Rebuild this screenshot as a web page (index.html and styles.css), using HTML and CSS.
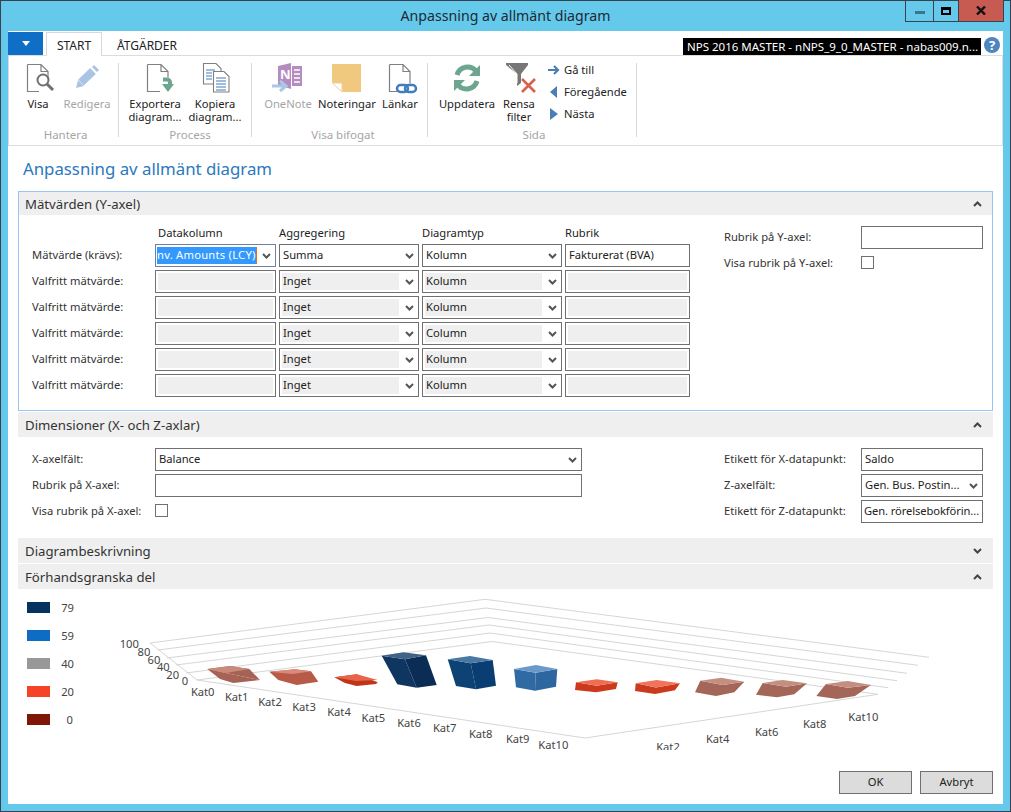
FILE: index.html
```html
<!DOCTYPE html>
<html lang="sv">
<head>
<meta charset="utf-8">
<title>Anpassning av allmänt diagram</title>
<link rel="stylesheet" href="styles.css">
</head>
<body>
<svg class="defs" aria-hidden="true">
  <symbol id="chev" viewBox="0 0 9 6"><path d="M1 1l3.500 3.500L8 1" fill="none" stroke="#555" stroke-width="2"/></symbol>
  <symbol id="chev-up" viewBox="0 0 9 6"><path d="M1 5l3.500-3.500L8 5" fill="none" stroke="#444" stroke-width="2"/></symbol>
  <symbol id="chev-down" viewBox="0 0 9 6"><path d="M1 1l3.500 3.500L8 1" fill="none" stroke="#444" stroke-width="2"/></symbol>
</svg>
<div class="window">
  <header class="titlebar">
    <span></span>
    <div class="titlebar-text">Anpassning av allmänt diagram</div>
    <div class="wincontrols">
      <div class="wc wc-min"><span class="wc-min-bar"></span></div>
      <div class="wc wc-max"><span class="wc-max-box"></span></div>
      <div class="wc wc-close"><svg width="10" height="9" viewBox="0 0 10 9"><path d="M1 .5l8 8M9 .5l-8 8" stroke="#111" stroke-width="2.400" fill="none"/></svg></div>
    </div>
  </header>
  <div class="client">
    <div class="tabrow">
      <div class="appmenu"><span class="appmenu-arrow"></span></div>
      <div class="tab tab-active">START</div>
      <div class="tab">ÅTGÄRDER</div>
      <div class="tabrow-right">
        <div class="company">NPS 2016 MASTER - nNPS_9_0_MASTER - nabas009.n...</div>
        <div class="help">?</div>
      </div>
    </div>
    <div class="ribbon">
      <div class="group group-a">
        <div class="group-btns">
          <div class="rbtn w50"><svg class="ico" width="32" height="30" viewBox="0 0 32 30"><path d="M5.500 1.500H19l7 7v8M5.500 1.500v27H17M19 1.500v7h7" fill="none" stroke="#808080" stroke-width="1.200"/><circle cx="21" cy="17" r="5.500" fill="#fff" stroke="#707070" stroke-width="2"/><path d="M25 21l6 6" stroke="#707070" stroke-width="3"/></svg><span class="rlabel">Visa</span></div>
          <div class="rbtn w48 off"><svg class="ico" width="32" height="30" viewBox="0 0 32 30"><path d="M5 25l2-8 6 6z" fill="#a9c4e4"/><path d="M10 19.500L22 8" stroke="#a9c4e4" stroke-width="8"/><path d="M23.500 6.500l2-2" stroke="#a9c4e4" stroke-width="7"/></svg><span class="rlabel">Redigera</span></div>
        </div>
        <div class="group-label">Hantera</div>
      </div>
      <div class="group group-b">
        <div class="group-btns">
          <div class="rbtn w60"><svg class="ico" width="32" height="30" viewBox="0 0 32 30"><path d="M8.500 1.500H22l7 7v6M8.500 1.500v27H21M22 1.500v7h7" fill="none" stroke="#808080" stroke-width="1.200"/><path d="M24 16.500h4a3 3 0 0 1 3 3v4" fill="none" stroke="#6ea58f" stroke-width="4"/><path d="M23 21h12l-6 8z" fill="#6ea58f"/></svg><span class="rlabel">Exportera<br>diagram...</span></div>
          <div class="rbtn w60"><svg class="ico" width="32" height="30" viewBox="0 0 32 30"><path d="M14 21H4.500V.5H17l5 5v3" fill="#fff" stroke="#808080" stroke-width="1.100"/><path d="M7 7h9M7 10h6M7 13h6M7 16h6" stroke="#3f7dbc"/><path d="M14.500 8.500H25l5 5v15.500H14.500z" fill="#fff" stroke="#808080" stroke-width="1.100"/><path d="M17 15h10M17 18h10M17 21h10M17 24h10M17 27h10" stroke="#3f7dbc"/></svg><span class="rlabel">Kopiera<br>diagram...</span></div>
        </div>
        <div class="group-label group-label-b">Process</div>
      </div>
      <div class="group group-c">
        <div class="group-btns">
          <div class="rbtn w58 off"><svg class="ico" width="36" height="30" viewBox="0 0 36 30"><path d="M8 3l13-3v26l-13-4z" fill="#b58cc0"/><path d="M22 3h10v20H22z" fill="#b58cc0"/><path d="M24 7h6M24 11h6M24 15h6M24 19h6" stroke="#fff" stroke-width="1.500"/><text class="onenote-n" x="10" y="16">N</text><path d="M2 23h13M10 18l6 5-6 5" fill="none" stroke="#a8c8e6" stroke-width="3"/></svg><span class="rlabel">OneNote</span></div>
          <div class="rbtn w60"><svg class="ico" width="32" height="30" viewBox="0 0 32 30"><path d="M1 1h29v28H12L1 19z" fill="#f0c97f"/><path d="M1.500 20h9.500v9z" fill="#fff" stroke="#e8d0a0"/></svg><span class="rlabel">Noteringar</span></div>
          <div class="rbtn w46"><svg class="ico" width="32" height="30" viewBox="0 0 32 30"><path d="M5.500 1.500H19l7 7v12M5.500 1.500v27H13M19 1.500v7h7" fill="none" stroke="#808080" stroke-width="1.200"/><rect x="13" y="22" width="11" height="7" rx="3.500" fill="none" stroke="#3f7dbc" stroke-width="2.500"/><rect x="21" y="22" width="11" height="7" rx="3.500" fill="none" stroke="#3f7dbc" stroke-width="2.500"/></svg><span class="rlabel">Länkar</span></div>
        </div>
        <div class="group-label">Visa bifogat</div>
      </div>
      <div class="group group-d">
        <div class="group-btns">
          <div class="rbtn w70"><svg class="ico" width="32" height="30" viewBox="0 0 32 30"><path d="M6 12a11 11 0 0 1 19-4" fill="none" stroke="#6ea58f" stroke-width="5"/><path d="M29 2v11H18z" fill="#6ea58f"/><path d="M26 18a11 11 0 0 1-19 4" fill="none" stroke="#6ea58f" stroke-width="5"/><path d="M3 28V17h11z" fill="#6ea58f"/></svg><span class="rlabel">Uppdatera</span></div>
          <div class="rbtn w34"><svg class="ico" width="32" height="30" viewBox="0 0 32 30"><path d="M3 0h22v2l-7 9v9l-4 3V11L3 2z" fill="#777"/><path d="M6 2l8 9v9" fill="none" stroke="#fff"/><path d="M19 16l13 13M32 16L19 29" stroke="#d9604a" stroke-width="2.600"/></svg><span class="rlabel">Rensa<br>filter</span></div>
          <div class="navlist">
            <div class="navitem"><svg class="navico" width="12" height="12" viewBox="0 0 12 12"><path d="M0 6h9M6 2l4 4-4 4" fill="none" stroke="#4a7fb5" stroke-width="2.200"/></svg>Gå till</div>
            <div class="navitem"><svg class="navico" width="12" height="12" viewBox="0 0 12 12"><path d="M9 0v12L2 6z" fill="#4a7fb5"/></svg>Föregående</div>
            <div class="navitem"><svg class="navico" width="12" height="12" viewBox="0 0 12 12"><path d="M2 0v12l8-6z" fill="#4a7fb5"/></svg>Nästa</div>
          </div>
        </div>
        <div class="group-label">Sida</div>
      </div>
    </div>
    <main class="page">
      <h1 class="page-title">Anpassning av allmänt diagram</h1>

      <section class="sec sec-focus">
        <div class="sec-head sec-head-focus">Mätvärden (Y-axel)<svg class="sec-chev"><use href="#chev-up"/></svg></div>
        <div class="sec-body sec-body-y">
          <div class="grid-y">
            <span></span><div class="colhead colhead-first">Datakolumn</div><div class="colhead">Aggregering</div><div class="colhead">Diagramtyp</div><div class="colhead">Rubrik</div>

            <div class="lbl">Mätvärde (krävs):</div>
            <div class="fld fld-sel fld-active"><span class="sel-text"><span class="selection">nv. Amounts (LCY)</span><span class="caret"></span></span><svg class="chev"><use href="#chev"/></svg></div>
            <div class="fld fld-sel"><span class="val">Summa</span><svg class="chev"><use href="#chev"/></svg></div>
            <div class="fld fld-sel"><span class="val">Kolumn</span><svg class="chev"><use href="#chev"/></svg></div>
            <div class="fld"><span class="val">Fakturerat (BVA)</span></div>

            <div class="lbl">Valfritt mätvärde:</div>
            <div class="fld"><span class="dis"></span></div>
            <div class="fld fld-sel"><span class="dis">Inget</span><svg class="chev"><use href="#chev"/></svg></div>
            <div class="fld fld-sel"><span class="dis">Kolumn</span><svg class="chev"><use href="#chev"/></svg></div>
            <div class="fld"><span class="dis"></span></div>

            <div class="lbl">Valfritt mätvärde:</div>
            <div class="fld"><span class="dis"></span></div>
            <div class="fld fld-sel"><span class="dis">Inget</span><svg class="chev"><use href="#chev"/></svg></div>
            <div class="fld fld-sel"><span class="dis">Kolumn</span><svg class="chev"><use href="#chev"/></svg></div>
            <div class="fld"><span class="dis"></span></div>

            <div class="lbl">Valfritt mätvärde:</div>
            <div class="fld"><span class="dis"></span></div>
            <div class="fld fld-sel"><span class="dis">Inget</span><svg class="chev"><use href="#chev"/></svg></div>
            <div class="fld fld-sel"><span class="dis">Column</span><svg class="chev"><use href="#chev"/></svg></div>
            <div class="fld"><span class="dis"></span></div>

            <div class="lbl">Valfritt mätvärde:</div>
            <div class="fld"><span class="dis"></span></div>
            <div class="fld fld-sel"><span class="dis">Inget</span><svg class="chev"><use href="#chev"/></svg></div>
            <div class="fld fld-sel"><span class="dis">Kolumn</span><svg class="chev"><use href="#chev"/></svg></div>
            <div class="fld"><span class="dis"></span></div>

            <div class="lbl">Valfritt mätvärde:</div>
            <div class="fld"><span class="dis"></span></div>
            <div class="fld fld-sel"><span class="dis">Inget</span><svg class="chev"><use href="#chev"/></svg></div>
            <div class="fld fld-sel"><span class="dis">Kolumn</span><svg class="chev"><use href="#chev"/></svg></div>
            <div class="fld"><span class="dis"></span></div>
          </div>
          <div class="grid-right">
            <div class="lbl">Rubrik på Y-axel:</div><div class="fld"></div>
            <div class="lbl">Visa rubrik på Y-axel:</div><div class="chk-cell"><span class="chk"></span></div>
          </div>
        </div>
      </section>

      <section class="sec sec-dim">
        <div class="sec-head">Dimensioner (X- och Z-axlar)<svg class="sec-chev"><use href="#chev-up"/></svg></div>
        <div class="sec-body sec-body-x">
          <div class="grid-x">
            <div class="lbl">X-axelfält:</div>
            <div class="fld fld-sel"><span class="val">Balance</span><svg class="chev"><use href="#chev"/></svg></div>
            <div class="lbl">Rubrik på X-axel:</div>
            <div class="fld"></div>
            <div class="lbl">Visa rubrik på X-axel:</div>
            <div class="chk-cell"><span class="chk"></span></div>
          </div>
          <div class="grid-right grid-right-x">
            <div class="lbl">Etikett för X-datapunkt:</div><div class="fld"><span class="val">Saldo</span></div>
            <div class="lbl">Z-axelfält:</div><div class="fld fld-sel"><span class="val">Gen. Bus. Postin...</span><svg class="chev"><use href="#chev"/></svg></div>
            <div class="lbl">Etikett för Z-datapunkt:</div><div class="fld"><span class="val val-tight">Gen. rörelsebokförin...</span></div>
          </div>
        </div>
      </section>

      <section class="sec">
        <div class="sec-head">Diagrambeskrivning<svg class="sec-chev"><use href="#chev-down"/></svg></div>
      </section>

      <section class="sec sec-preview">
        <div class="sec-head">Förhandsgranska del<svg class="sec-chev"><use href="#chev-up"/></svg></div>
        <svg class="chart" width="975" height="161" viewBox="18 589 975 161">
          <!-- legend -->
          <rect x="27" y="602" width="23" height="11" fill="#06325f"/><text class="ct end" x="74" y="612">79</text>
          <rect x="27" y="630" width="23" height="11" fill="#0f6cc4"/><text class="ct end" x="74" y="640">59</text>
          <rect x="27" y="658" width="23" height="11" fill="#989898"/><text class="ct end" x="74" y="668">40</text>
          <rect x="27" y="686" width="23" height="11" fill="#f44326"/><text class="ct end" x="74" y="696">20</text>
          <rect x="27" y="714" width="23" height="11" fill="#801605"/><text class="ct end" x="73" y="724">0</text>
          <!-- grid -->
          <g fill="none" stroke="#d6d6d6" stroke-width="1">
            <path d="M150 643L485 599.300 929 657.300"/>
            <path d="M158 650L486 608 918 665.300"/>
            <path d="M167 658L488 617.500 907 673.300"/>
            <path d="M176 665L489 625 897 680.700"/>
            <path d="M186 673L490 633 888 687.700"/>
            <path d="M197 680L492 641.500 878 694.300"/>
            <path d="M150 643L197 680L585 738L878 694.300"/>
          </g>
          <!-- bars -->
          <path d="M207.300 669L226 673 260 680 233.300 683 220 679z" fill="#a56255"/><path d="M207.300 669L230 666 249.300 669 260 680 226 673z" fill="#a56255"/><path d="M207.300 669L230 666 249.300 669 226 673z" fill="#c98a7a"/>
          <path d="M269.300 671.700L295 669.300 311 671.300 318.300 681.700 296.700 685 278.300 680z" fill="#b85a48"/><path d="M269.300 671.700L295 669.300 311 671.300 293 674z" fill="#d98a78"/>
          <path d="M334.300 677.300L356.700 674.300 377.700 682.300 376 684 356.700 686 345 683z" fill="#c0341a"/><path d="M334.300 677.300L356.700 674.300 377.700 680 356 681z" fill="#e8654a"/>
          <path d="M381.700 655.700L405 659.300 416.700 687.700 397.300 684.300z" fill="#0f3661"/><path d="M405 659.300L426 655.300 436.700 685 416.700 687.700z" fill="#0a2c55"/><path d="M381.700 655.700L403.300 652.300 426 655.300 405 659.300z" fill="#3f6285"/>
          <path d="M447.700 659.300L470.700 663.300 476 689.300 456 686z" fill="#0d4275"/><path d="M470.700 663.300L492.700 660 496 685.700 476 689.300z" fill="#0a3e72"/><path d="M447.700 659.300L470 656 492.700 660 470.700 663.300z" fill="#4a78a4"/>
          <path d="M514 669L535.700 672.700 535 690.700 516 687.300z" fill="#2f6aa5"/><path d="M535.700 672.700L557.300 669 556 686.700 535 690.700z" fill="#2e669f"/><path d="M514 669L536 665 557.300 669 535.700 672.700z" fill="#6b9aca"/>
          <path d="M576 682.300L596.700 685.700 617.700 682.300 616 689 596 692.300 575 690z" fill="#cc3a1e"/><path d="M576 682.300L596.700 679.300 617.700 682.300 596.700 685.700z" fill="#ef6d52"/>
          <path d="M635.700 683.300L656 687.500 680 683.300 675 690.300 655 694 635 691z" fill="#cc3a1e"/><path d="M635.700 683.300L656.700 680 680 683.300 656 687.500z" fill="#ef7459"/>
          <path d="M700.300 680.700L722.700 685 744.300 681.700 734.300 692.300 716 696 695 692.300z" fill="#a5665a"/><path d="M700.300 680.700L721 677.700 744.300 681.700 722.700 685z" fill="#c48e80"/>
          <path d="M762.700 683L786 686.700 807 683.300 794.300 694.300 777 697.300 756 694.700z" fill="#a5665a"/><path d="M762.700 683L782.700 680 807 683.300 786 686.700z" fill="#c48e80"/>
          <path d="M826 684L847.700 687.700 871 685 855 696 837 699 816.300 696z" fill="#a5665a"/><path d="M826 684L847.700 681 871 685 847.700 687.700z" fill="#c48e80"/>
          <!-- y axis labels -->
          <text class="ct mid" x="129.300" y="647.500">100</text>
          <text class="ct mid" x="144" y="656">80</text>
          <text class="ct mid" x="154" y="664">60</text>
          <text class="ct mid" x="163.300" y="671">40</text>
          <text class="ct mid" x="172.700" y="679">20</text>
          <text class="ct mid" x="185" y="685">0</text>
          <!-- left axis -->
          <text class="ct mid" x="202.700" y="696">Kat0</text>
          <text class="ct mid" x="236.700" y="701">Kat1</text>
          <text class="ct mid" x="270" y="706">Kat2</text>
          <text class="ct mid" x="304" y="711">Kat3</text>
          <text class="ct mid" x="339" y="716">Kat4</text>
          <text class="ct mid" x="373.300" y="722">Kat5</text>
          <text class="ct mid" x="409" y="727">Kat6</text>
          <text class="ct mid" x="444.700" y="732">Kat7</text>
          <text class="ct mid" x="480.700" y="738">Kat8</text>
          <text class="ct mid" x="517.700" y="743">Kat9</text>
          <text class="ct mid" x="553.300" y="749">Kat10</text>
          <!-- right axis -->
          <text class="ct mid" x="668" y="751">Kat2</text>
          <text class="ct mid" x="717.700" y="743">Kat4</text>
          <text class="ct mid" x="766.700" y="736">Kat6</text>
          <text class="ct mid" x="814.700" y="728">Kat8</text>
          <text class="ct mid" x="863.300" y="721">Kat10</text>
        </svg>
      </section>

      <footer class="footer">
        <div class="btn">OK</div>
        <div class="btn">Avbryt</div>
      </footer>
    </main>
  </div>
</div>
</body>
</html>
```

FILE: styles.css
```css
* { box-sizing: border-box; }
html, body { margin: 0; padding: 0; height: 100%; overflow: hidden; }
body {
  font-family: "Noto Sans", "Open Sans", "Liberation Sans", sans-serif;
  font-size: 11.200px;
  color: #222;
  background: #65c9ec;
}
.defs { width: 0; height: 0; display: block; position: absolute; }

.window {
  width: 1011px;
  height: 812px;
  border: 1px solid #37434e;
  background: #65c9ec;
  display: flex;
  flex-direction: column;
}
.titlebar {
  height: 30px;
  flex: none;
  display: grid;
  grid-template-columns: 1fr auto 1fr;
  padding: 0 6px;
}
.titlebar-text { font-size: 14.150px; line-height: 30px; color: #1c2a33; }
.wincontrols { justify-self: end; display: flex; height: 21px; margin-top: -1px; }
.wc {
  height: 22px;
  border: 1px solid #37434e;
  border-top: 0;
  display: flex;
  align-items: center;
  justify-content: center;
  margin-left: -1px;
}
.wc-min { width: 29px; }
.wc-max { width: 26px; }
.wc-close { width: 46px; background: #c75b52; }
.wc-min-bar { width: 10px; height: 3px; background: #3f7389; margin-top: 4px; }
.wc-max-box { width: 10px; height: 8px; border: 2px solid #000; border-top-width: 3px; }

.client {
  flex: 1;
  margin: 0 7px 7px;
  background: #fff;
  display: flex;
  flex-direction: column;
  min-height: 0;
}

.tabrow { height: 24px; display: flex; flex: none; padding-top: 1px; position: relative; }
.appmenu {
  width: 35px;
  height: 23px;
  background: #0f6fc6;
  display: flex;
  align-items: center;
  justify-content: center;
}
.appmenu-arrow { width: 0; height: 0; border: 4px solid transparent; border-top: 5px solid #fff; border-bottom: 0; }
.tab {
  height: 24px;
  line-height: 27px;
  font-size: 12px;
  color: #222;
  margin-left: 3px;
  width: 56px;
  text-align: center;
  padding: 0;
}
.tab + .tab { width: 90px; margin-left: 0; }
.tab-active {
  border: 1px solid #d8d8d8;
  border-bottom: 0;
  background: #fff;
  position: relative;
  z-index: 1;
  line-height: 25px;
}
.tabrow-right { margin-left: auto; display: flex; align-items: center; padding-right: 3px; }
.company {
  width: 298px;
  height: 17px;
  background: #000;
  color: #fff;
  font-size: 11.500px;
  line-height: 17px;
  padding-left: 4px;
  white-space: nowrap;
  overflow: hidden;
  margin-top: 5px;
}
.help {
  width: 16px;
  height: 16px;
  border-radius: 50%;
  background: #4f86c0;
  color: #fff;
  font-weight: 700;
  font-size: 13px;
  line-height: 16px;
  text-align: center;
  margin-left: 3px;
  margin-top: 3px;
}

.ribbon {
  height: 91px;
  flex: none;
  border: 1px solid #dcdcdc;
  display: flex;
  padding-top: 7px;
}
.group {
  height: 74px;
  border-right: 1px solid #d8d8d8;
  display: flex;
  flex-direction: column;
}
.group-a { width: 110px; padding-left: 4px; }
.group-b { width: 133px; padding-left: 6px; }
.group-c { width: 176px; padding-left: 7px; }
.group-d { width: 209px; padding-left: 4px; }
.group-btns { display: flex; height: 65px; flex: none; }
.group-label { line-height: 14px; margin-bottom: -5px; text-align: center; color: #a5a5a5; font-size: 11.500px; }
.group-label-b { padding-left: 4px; }
.rbtn { display: flex; flex-direction: column; align-items: center; text-align: center; line-height: 13px; white-space: nowrap; flex: none; }
.ico { display: block; flex: none; margin-bottom: 4px; overflow: visible; }
.off { color: #a5a5a5; }
.w34 { width: 34px; }
.w46 { width: 46px; }
.w48 { width: 48px; }
.w50 { width: 50px; }
.w58 { width: 58px; }
.w60 { width: 60px; }
.w70 { width: 70px; }
.onenote-n { font-size: 13px; font-weight: 700; fill: #fff; }
.navlist { margin: -1px 0 0 12px; display: flex; flex-direction: column; gap: 6px; }
.navitem { height: 16px; line-height: 16px; display: flex; align-items: center; gap: 4px; white-space: nowrap; }
.navico { flex: none; }

.page { flex: 1; padding: 0 10px; display: flex; flex-direction: column; min-height: 0; }
.page-title {
  margin: 0;
  height: 45px;
  flex: none;
  display: flex;
  align-items: center;
  padding-left: 5px;
  font-size: 16.800px;
  font-weight: 400;
  color: #2a78c0;
}

.sec { flex: none; }
.sec-focus { border: 1px solid #9bc3f5; }
.sec-dim { margin-top: 1px; }
.sec-preview { margin-top: 1px; }
.sec-head {
  height: 25px;
  background: #efefef;
  display: flex;
  align-items: center;
  justify-content: space-between;
  padding: 1px 11px 0 7px;
  font-size: 13.200px;
  color: #333;
}
.sec-head-focus { height: 23px; padding: 0 10px 0 6px; }
.sec-chev { width: 9px; height: 6px; }

.sec-body { display: flex; }
.sec-body-y { padding: 11px 0 13px 13px; }
.sec-body-x { padding: 11px 0 15px 14px; }

.grid-y {
  display: grid;
  grid-template-columns: 120px 121px 140px 140px 125px;
  grid-template-rows: 15px repeat(6, 23px);
  gap: 3px;
  align-items: center;
}
.colhead { line-height: 13px; height: 15px; white-space: nowrap; }
.colhead-first { padding-left: 3px; }
.lbl { white-space: nowrap; color: #333; padding-bottom: 2px; }

.fld {
  height: 23px;
  border: 1px solid #707070;
  display: flex;
  align-items: center;
  padding: 2px;
  background: #fff;
  min-width: 0;
}
.fld-sel { padding-right: 4px; gap: 6px; }
.fld-active { border-color: #6f7fa8; padding-left: 1px; gap: 2px; }
.val { flex: 1; padding: 0 0 2px 1px; white-space: nowrap; overflow: hidden; min-width: 0; }
.val-tight { padding-left: 0; letter-spacing: -0.1px; }
.dis {
  flex: 1;
  height: 17px;
  line-height: 15px;
  background: #efefef;
  white-space: nowrap;
  padding-left: 1px;
  min-width: 0;
}
.sel-text { flex: 1; display: flex; align-items: center; white-space: nowrap; overflow: hidden; min-width: 0; }
.selection { background: #3399ff; color: #fff; height: 17px; line-height: 15px; flex: none; letter-spacing: 0.25px; }
.caret { width: 1px; height: 17px; background: #d9701a; flex: none; }
.chev { width: 9px; height: 6px; flex: none; }

.grid-right {
  margin-left: 34px;
  display: grid;
  grid-template-columns: 137px 122px;
  grid-template-rows: 23px 23px;
  gap: 3px 0;
  align-items: center;
  align-self: flex-start;
}
.grid-right-x { margin-left: 142px; grid-template-rows: repeat(3, 23px); }
.grid-x {
  display: grid;
  grid-template-columns: 123px 427px;
  grid-template-rows: repeat(3, 23px);
  gap: 3px 0;
  align-items: center;
}
.chk-cell { display: flex; align-items: center; height: 23px; padding-bottom: 2px; }
.chk { width: 13px; height: 13px; border: 1px solid #707070; background: #fff; display: block; }

.chart { display: block; }
.ct { font-size: 11.200px; fill: #444; }
.mid { text-anchor: middle; }
.end { text-anchor: end; }

.footer { display: flex; justify-content: flex-end; gap: 8px; margin-top: 21px; flex: none; }
.btn {
  width: 73px;
  height: 23px;
  border: 1px solid #707070;
  background: #dcdcdc;
  text-align: center;
  line-height: 20px;
  color: #222;
}
```
